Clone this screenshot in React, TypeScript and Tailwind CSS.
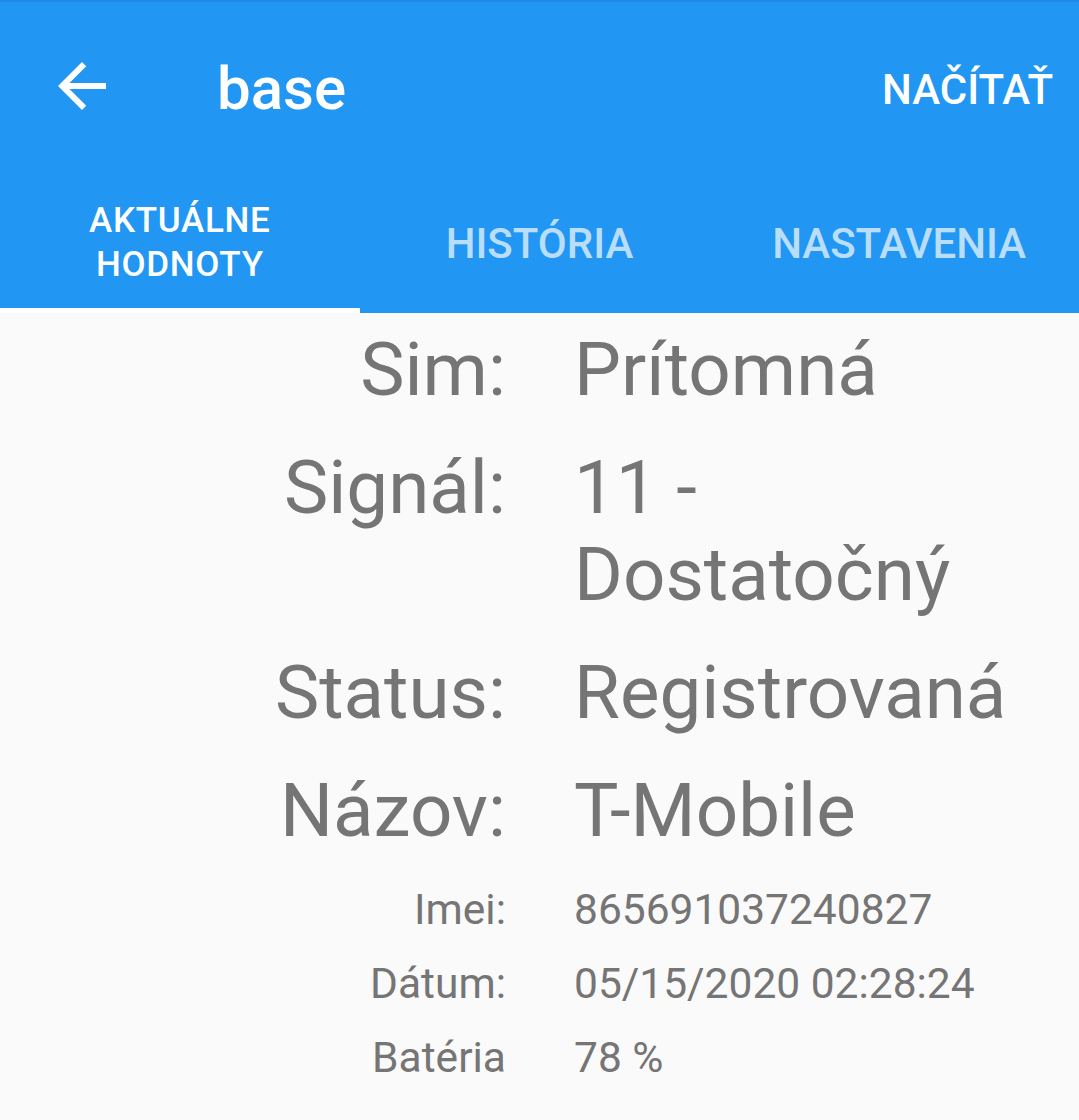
import React from "react";

type Row = { label: string; value: string; big: boolean };

const rows: Row[] = [
  { label: "Sim:", value: "Prítomná", big: true },
  { label: "Signál:", value: "11 - Dostatočný", big: true },
  { label: "Status:", value: "Registrovaná", big: true },
  { label: "Názov:", value: "T-Mobile", big: true },
  { label: "Imei:", value: "865691037240827", big: false },
  { label: "Dátum:", value: "05/15/2020 02:28:24", big: false },
  { label: "Batéria", value: "78 %", big: false },
];

function BackArrow() {
  return (
    <svg viewBox="0 0 24 24" className="h-[72px] w-[72px] fill-white">
      <path d="M20 11H7.83l5.59-5.59L12 4l-8 8 8 8 1.41-1.41L7.83 13H20v-2z" />
    </svg>
  );
}

export default function App() {
  return (
    <div className="min-h-[1120px] w-[1079px] bg-[#fafafa] font-['Roboto',sans-serif] text-[#757575]">
      <header className="border-t-2 border-[#1e88e5] bg-[#2196f3] text-white">
        <div className="flex h-[168px] items-center pl-[46px] pr-[26px]">
          <BackArrow />
          <h1 className="ml-[99px] mt-[6px] text-[60px] font-medium">base</h1>
          <button className="ml-auto mt-[6px] text-[42px] font-medium">NAČÍTAŤ</button>
        </div>
        <nav className="grid h-[143px] grid-cols-3">
          <div className="flex flex-col">
            <div className="flex flex-1 items-center justify-center pt-[8px] text-center text-[35px] font-medium leading-[44px] tracking-[0.02em]">
              AKTUÁLNE
              <br />
              HODNOTY
            </div>
            <div className="h-[5px] w-full bg-white" />
          </div>
          <div className="flex items-center justify-center pt-[4px] text-[42px] font-medium text-white/70">
            HISTÓRIA
          </div>
          <div className="flex items-center justify-center pt-[4px] text-[42px] font-medium text-white/70">
            NASTAVENIA
          </div>
        </nav>
      </header>

      <main className="pt-[13px]">
        {rows.map((row, i) => (
          <div
            key={row.label}
            className={
              row.big
                ? `flex text-[74.5px] leading-[87px] ${i === 0 ? "" : "mt-[31px]"}`
                : `flex text-[42.5px] leading-[49px] ${i === 4 ? "mt-[31px]" : "mt-[25px]"}`
            }
          >
            <div className="w-[506px] shrink-0 text-right">{row.label}</div>
            <div className="ml-[68px] w-[470px]">{row.value}</div>
          </div>
        ))}
      </main>
    </div>
  );
}
